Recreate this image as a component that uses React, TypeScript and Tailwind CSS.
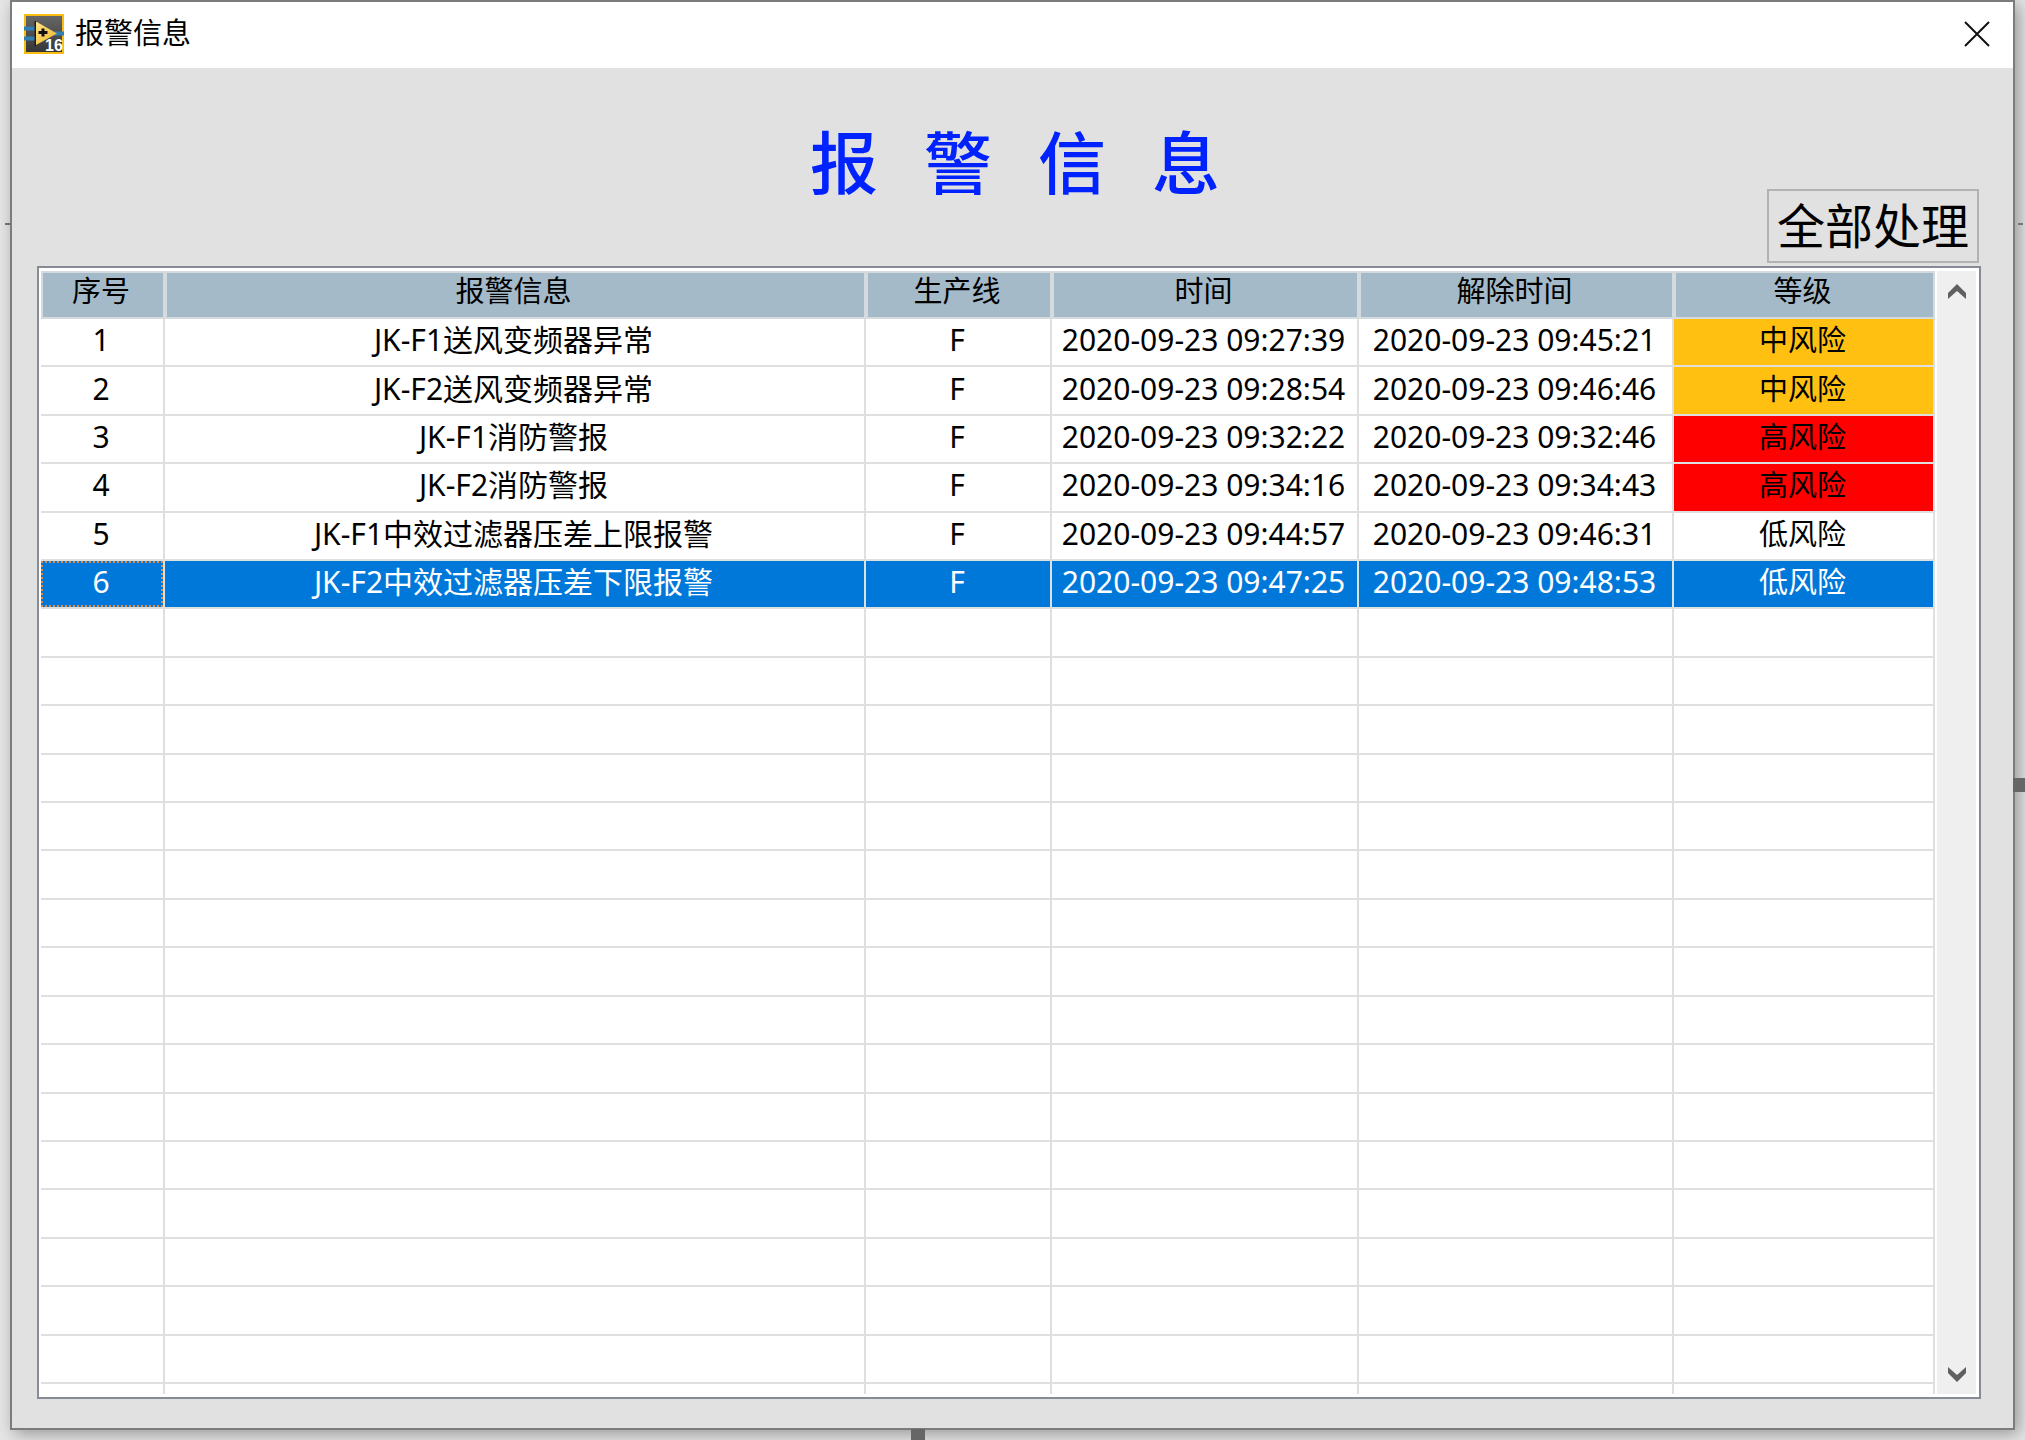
import React from "react";

type Level = "中风险" | "高风险" | "低风险";

interface Alarm {
  message: string;
  line: string;
  time: string;
  cleared: string;
  level: Level;
}

const alarms: Alarm[] = [
  { message: "JK-F1送风变频器异常", line: "F", time: "2020-09-23 09:27:39", cleared: "2020-09-23 09:45:21", level: "中风险" },
  { message: "JK-F2送风变频器异常", line: "F", time: "2020-09-23 09:28:54", cleared: "2020-09-23 09:46:46", level: "中风险" },
  { message: "JK-F1消防警报", line: "F", time: "2020-09-23 09:32:22", cleared: "2020-09-23 09:32:46", level: "高风险" },
  { message: "JK-F2消防警报", line: "F", time: "2020-09-23 09:34:16", cleared: "2020-09-23 09:34:43", level: "高风险" },
  { message: "JK-F1中效过滤器压差上限报警", line: "F", time: "2020-09-23 09:44:57", cleared: "2020-09-23 09:46:31", level: "低风险" },
  { message: "JK-F2中效过滤器压差下限报警", line: "F", time: "2020-09-23 09:47:25", cleared: "2020-09-23 09:48:53", level: "低风险" },
];

const headers = ["序号", "报警信息", "生产线", "时间", "解除时间", "等级"];
const selectedIndex = 5;
const emptyRows = 16;

const levelColor: Record<Level, string> = {
  中风险: "bg-[#ffc012]",
  高风险: "bg-[#ff0000]",
  低风险: "",
};

const cell = "border-r-2 border-b-2 border-[#dfdfdf] p-0 pr-0.5 pb-1 text-center font-normal whitespace-nowrap";

function AppIcon() {
  return (
    <svg className="size-10 shrink-0" viewBox="0 0 40 40" aria-hidden="true">
      <defs>
        <linearGradient id="plate" x1="0" y1="0" x2="0" y2="1">
          <stop offset="0" stopColor="#686868" />
          <stop offset="1" stopColor="#353535" />
        </linearGradient>
        <linearGradient id="arrow" x1="0" y1="0" x2="1" y2="1">
          <stop offset="0" stopColor="#ffe38a" />
          <stop offset="1" stopColor="#efb520" />
        </linearGradient>
      </defs>
      <rect x="1" y="1" width="38" height="38" fill="url(#plate)" stroke="#f7bd12" strokeWidth="2" />
      <path d="M0 14.5h11M0 24.5h11M30 19.5h10" stroke="#2f7fb5" strokeWidth="4" />
      <path d="M11.5 7v25" stroke="#1c1c1c" strokeWidth="2" />
      <path d="M12 7.5L33 19.5L12 31z" fill="url(#arrow)" />
      <path d="M14.5 18.5h9M19 14.5v8" stroke="#111" strokeWidth="3" />
      <text x="21" y="37" fill="#fff" fontSize="16" fontWeight="700" fontFamily="Liberation Sans, sans-serif">16</text>
    </svg>
  );
}

function Chevron({ down = false }: { down?: boolean }) {
  return (
    <svg className="h-4 w-5" viewBox="0 0 20 16" aria-hidden="true">
      <path d={down ? "M1 1L10 9L19 1V7L10 16L1 7z" : "M1 15L10 7L19 15V9L10 0L1 9z"} fill="#606060" />
    </svg>
  );
}

export default function App() {
  return (
    <div className="relative flex h-screen min-h-[1100px] flex-col bg-[#e6e6e6] px-[10px] pb-[10px] font-['Noto_Sans','Noto_Sans_CJK_SC',sans-serif] text-[29px] leading-9 text-black">
      <span className="absolute top-[223px] left-[5px] h-[2px] w-[5px] bg-[#777]" />
      <main className="relative flex min-h-0 flex-1 flex-col border-2 border-[#7c7c7c] bg-[#e1e1e1] shadow-[4px_4px_16px_rgba(0,0,0,0.35)]">
        <header className="flex h-[66px] shrink-0 items-center justify-between bg-white pr-[18px] pb-0.5 pl-3">
          <div className="flex items-center gap-[11px]">
            <AppIcon />
            <span className="pb-0.5">报警信息</span>
          </div>
          <button type="button" aria-label="关闭" className="flex size-9 items-center justify-center">
            <svg className="size-[26px]" viewBox="0 0 26 26" aria-hidden="true">
              <path d="M1 1L25 25M25 1L1 25" stroke="#111" strokeWidth="2" fill="none" />
            </svg>
          </button>
        </header>

        <section className="flex min-h-0 flex-1 flex-col pr-[32px] pb-[29px] pl-[25px]">
          <div className="relative flex h-[198px] shrink-0 justify-center pt-[49px]">
            <h1 className="flex gap-[46px] pl-3 text-[68px] leading-[92px] font-medium text-[#0022ff]">
              <span>报</span>
              <span>警</span>
              <span>信</span>
              <span>息</span>
            </h1>
            <button type="button" className="absolute right-0 bottom-[3px] mr-0.5 h-[74px] border-2 border-[#b2b2b2] px-2 text-[48px] leading-[70px]">
              全部处理
            </button>
          </div>

          <div className="flex min-h-0 flex-1 border-2 border-[#868b96] bg-white p-[3px] pl-0.5">
            <div className="min-h-0 flex-1">
              <table className="h-full w-full table-fixed border-separate border-spacing-0">
                <colgroup>
                  <col className="w-[124px]" />
                  <col />
                  <col className="w-[186px]" />
                  <col className="w-[307px]" />
                  <col className="w-[315px]" />
                  <col className="w-[261px]" />
                </colgroup>
                <thead>
                  <tr className="h-[48px]">
                    {headers.map((label) => (
                      <th key={label} scope="col" className="border-2 border-[#d5dade] bg-[#a4bac8] p-0 pr-1 pb-2 text-center leading-8 font-normal">
                        {label}
                      </th>
                    ))}
                  </tr>
                </thead>
                <tbody>
                  {alarms.map((alarm, i) => {
                    const selected = i === selectedIndex;
                    return (
                      <tr key={i} className={selected ? "bg-[#0078d9] text-white" : ""}>
                        <td className={selected ? `${cell} relative text-[30px]` : `${cell} text-[30px]`}>
                          {selected && <span className="absolute inset-0 border-2 border-dotted border-[#e08a45]" />}
                          {i + 1}
                        </td>
                        <td className={`${cell} text-[30px]`}>{alarm.message}</td>
                        <td className={`${cell} text-[30px]`}>{alarm.line}</td>
                        <td className={`${cell} text-[30px]`}>{alarm.time}</td>
                        <td className={`${cell} text-[30px]`}>{alarm.cleared}</td>
                        <td className={`${cell} ${selected ? "" : levelColor[alarm.level]}`}>{alarm.level}</td>
                      </tr>
                    );
                  })}
                  {Array.from({ length: emptyRows }, (_, r) => (
                    <tr key={r}>
                      {headers.map((label) => (
                        <td key={label} className={`${cell} text-[30px]`}>&nbsp;</td>
                      ))}
                    </tr>
                  ))}
                  <tr className="h-[10px]">
                    {headers.map((label) => (
                      <td key={label} className="border-r-2 border-[#dfdfdf] p-0" />
                    ))}
                  </tr>
                </tbody>
              </table>
            </div>
            <div className="ml-0.5 flex w-[39px] flex-col items-center justify-between bg-[#efefef] pt-[9px] pb-2">
              <button type="button" aria-label="向上滚动" className="flex h-6 w-full items-center justify-center">
                <Chevron />
              </button>
              <button type="button" aria-label="向下滚动" className="flex h-6 w-full items-center justify-center">
                <Chevron down />
              </button>
            </div>
          </div>
        </section>
      </main>
      <span className="absolute top-[223px] right-[2px] h-[2px] w-[5px] bg-[#777]" />
      <span className="absolute top-[54%] right-0 h-[14px] w-3 bg-[#666]" />
      <span className="absolute bottom-0 left-[45%] h-[11px] w-[14px] bg-[#666]" />
    </div>
  );
}
